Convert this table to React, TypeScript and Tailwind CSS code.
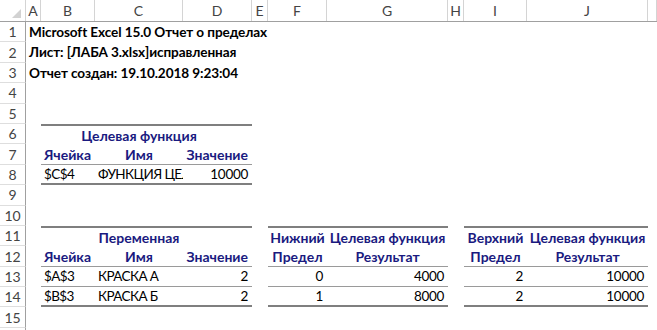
import type { ReactNode } from 'react'

type Col = 'A' | 'B' | 'C' | 'D' | 'E' | 'F' | 'G' | 'H' | 'I' | 'J' | 'K'
type Spec = { t?: ReactNode; c?: string }

const COLS: Col[] = ['A', 'B', 'C', 'D', 'E', 'F', 'G', 'H', 'I', 'J', 'K']

const WIDTH: Record<Col, string> = {
  A: 'w-[15px]',
  B: 'w-[54px]',
  C: 'w-[88px]',
  D: 'w-[69px]',
  E: 'w-[16px]',
  F: 'w-[59px]',
  G: 'w-[121px]',
  H: 'w-[16px]',
  I: 'w-[63px]',
  J: 'w-[121px]',
  K: 'flex-1',
}

// borders of the solver report tables
const TOP = 'border-t-2 border-t-[#7f7f7f]'
const BOT = 'border-b-2 border-b-[#7f7f7f]'
const THIN = 'border-b border-b-[#9a9a9a]'

const LEFT = 'justify-start pl-[3px]'
const RIGHT = 'justify-end pr-[4px]'
const MID = 'justify-center'
const HEAD = 'font-bold text-[#1a1a80]'
// calibri is narrower than lato in caps and digits
const TXT = 'text-[13.5px] tracking-[-0.6px]'
const NUM = 'text-[13.5px] tracking-[-0.3px]'

function Row({ n, cells = {} }: { n?: number; cells?: Partial<Record<Col, Spec>> }) {
  return (
    <div className="flex h-[20.4px]">
      <div className="w-[26px] shrink-0 flex items-center justify-center border-r border-r-[#a0a0a0] border-b border-b-[#dedede] text-[#444]">
        {n}
      </div>
      {COLS.map((col) => {
        const spec = cells[col]
        return (
          <div
            key={col}
            className={`shrink-0 h-full flex items-center whitespace-nowrap ${WIDTH[col]} ${spec?.c ?? ''}`}
          >
            {spec?.t}
          </div>
        )
      })}
    </div>
  )
}

function ColumnHeader() {
  return (
    <div className="flex h-[22px] border-b border-b-[#a0a0a0] text-[#444]">
      <div className="w-[26px] shrink-0 relative border-r border-r-[#d4d4d4]">
        <svg width="26" height="22" className="absolute left-0 top-0">
          <polygon points="21,9 21,18 12,18" fill="#d2d2d2" />
        </svg>
      </div>
      {COLS.map((col) => (
        <div
          key={col}
          className={`shrink-0 flex items-center justify-center border-r border-r-[#d4d4d4] ${WIDTH[col]}`}
        >
          {col === 'K' ? '' : col}
        </div>
      ))}
    </div>
  )
}

export default function App() {
  const title = (t: string): Spec => ({ t, c: `${LEFT} font-bold text-[13.6px] tracking-[-0.1px]` })
  return (
    <div className="w-[657px] h-[330px] overflow-hidden bg-white text-black text-[14px] font-['Lato',sans-serif]">
      <ColumnHeader />
      <Row n={1} cells={{ A: title('Microsoft Excel 15.0 Отчет о пределах') }} />
      <Row n={2} cells={{ A: title('Лист: [ЛАБА 3.xlsx]исправленная') }} />
      <Row n={3} cells={{ A: title('Отчет создан: 19.10.2018 9:23:04') }} />
      <Row n={4} />
      <Row n={5} />
      <Row
        n={6}
        cells={{
          B: { c: TOP },
          C: { t: 'Целевая функция', c: `${TOP} ${MID} ${HEAD}` },
          D: { c: TOP },
        }}
      />
      <Row
        n={7}
        cells={{
          B: { t: 'Ячейка', c: `${THIN} ${LEFT} ${HEAD}` },
          C: { t: 'Имя', c: `${THIN} ${MID} ${HEAD}` },
          D: { t: 'Значение', c: `${THIN} ${RIGHT} ${HEAD}` },
        }}
      />
      <Row
        n={8}
        cells={{
          B: { t: '$C$4', c: `${BOT} ${LEFT} ${TXT}` },
          C: { t: 'ФУНКЦИЯ ЦЕЛИ', c: `${BOT} ${LEFT} ${TXT} overflow-hidden` },
          D: { t: '10000', c: `${BOT} ${RIGHT} ${NUM}` },
        }}
      />
      <Row n={9} />
      <Row n={10} />
      <Row
        n={11}
        cells={{
          B: { c: TOP },
          C: { t: 'Переменная', c: `${TOP} ${MID} ${HEAD}` },
          D: { c: TOP },
          F: { t: 'Нижний', c: `${TOP} ${MID} ${HEAD}` },
          G: { t: 'Целевая функция', c: `${TOP} ${MID} ${HEAD}` },
          I: { t: 'Верхний', c: `${TOP} ${MID} ${HEAD}` },
          J: { t: 'Целевая функция', c: `${TOP} ${MID} ${HEAD}` },
        }}
      />
      <Row
        n={12}
        cells={{
          B: { t: 'Ячейка', c: `${THIN} ${LEFT} ${HEAD}` },
          C: { t: 'Имя', c: `${THIN} ${MID} ${HEAD}` },
          D: { t: 'Значение', c: `${THIN} ${RIGHT} ${HEAD}` },
          F: { t: 'Предел', c: `${THIN} ${MID} ${HEAD}` },
          G: { t: 'Результат', c: `${THIN} ${MID} ${HEAD}` },
          I: { t: 'Предел', c: `${THIN} ${MID} ${HEAD}` },
          J: { t: 'Результат', c: `${THIN} ${MID} ${HEAD}` },
        }}
      />
      <Row
        n={13}
        cells={{
          B: { t: '$A$3', c: `${THIN} ${LEFT} ${TXT}` },
          C: { t: 'КРАСКА А', c: `${THIN} ${LEFT} ${TXT}` },
          D: { t: '2', c: `${THIN} ${RIGHT} ${NUM}` },
          F: { t: '0', c: `${THIN} ${RIGHT} ${NUM}` },
          G: { t: '4000', c: `${THIN} ${RIGHT} ${NUM}` },
          I: { t: '2', c: `${THIN} ${RIGHT} ${NUM}` },
          J: { t: '10000', c: `${THIN} ${RIGHT} ${NUM}` },
        }}
      />
      <Row
        n={14}
        cells={{
          B: { t: '$B$3', c: `${BOT} ${LEFT} ${TXT}` },
          C: { t: 'КРАСКА Б', c: `${BOT} ${LEFT} ${TXT}` },
          D: { t: '2', c: `${BOT} ${RIGHT} ${NUM}` },
          F: { t: '1', c: `${BOT} ${RIGHT} ${NUM}` },
          G: { t: '8000', c: `${BOT} ${RIGHT} ${NUM}` },
          I: { t: '2', c: `${BOT} ${RIGHT} ${NUM}` },
          J: { t: '10000', c: `${BOT} ${RIGHT} ${NUM}` },
        }}
      />
      <Row n={15} />
      <Row />
    </div>
  )
}
